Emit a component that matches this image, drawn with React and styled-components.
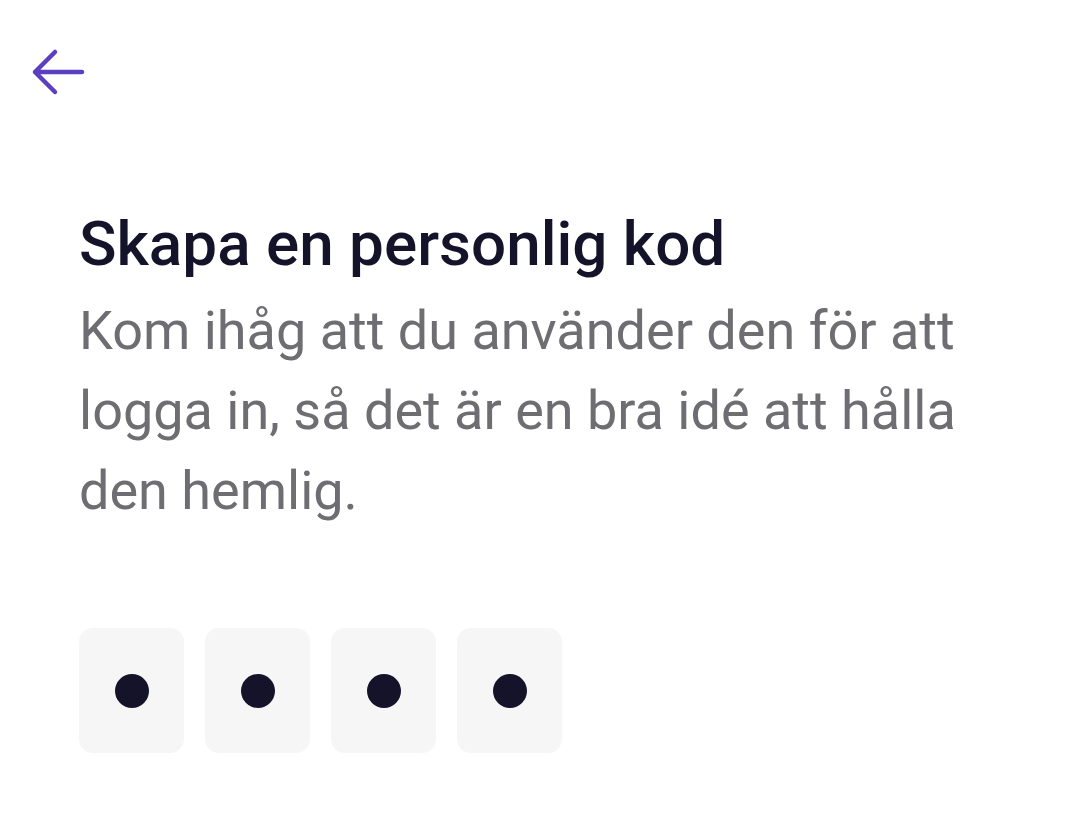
import React from 'react'
import styled, { createGlobalStyle } from 'styled-components'

const GlobalStyle = createGlobalStyle`
    body {
        margin: 0;
        background: #ffffff;
        font-family: Roboto, "Noto Sans", sans-serif;
    }
`

const Page = styled.div`
    width: 1075px;
    height: 815px;
    display: flex;
    flex-direction: column;
`

const TopBar = styled.div`
    height: 145px;
    padding: 46px 0 0 30px;
    box-sizing: border-box;
`

const BackButton = styled.button`
    border: none;
    background: none;
    padding: 0;
    width: 58px;
    height: 54px;
    cursor: pointer;
`

const Content = styled.div`
    padding: 63px 0 0 79px;
`

const Title = styled.h1`
    margin: 0;
    font-size: 62px;
    font-weight: 500;
    line-height: 72px;
    color: #15132a;
`

const Text = styled.p`
    margin: 11px 0 0;
    max-width: 910px;
    font-size: 54px;
    line-height: 80px;
    color: #6e6d72;
`

const Boxes = styled.div`
    display: flex;
    gap: 21px;
    margin-top: 97px;
`

const Box = styled.div`
    width: 105px;
    height: 125px;
    border-radius: 14px;
    background: #f6f6f7;
    display: flex;
    align-items: center;
    justify-content: center;
`

const Dot = styled.span`
    width: 34px;
    height: 34px;
    border-radius: 50%;
    background: ${(p) => (p.filled ? '#15132a' : 'transparent')};
`

const App = () => {
    const code = [1, 2, 3, 4]

    return (
        <Page>
            <GlobalStyle />
            <TopBar>
                <BackButton aria-label="Tillbaka">
                    <svg width="58" height="54" viewBox="0 0 58 54" fill="none">
                        <path
                            d="M52 26H5M25 6L5 26l20 20"
                            stroke="#5a3fc0"
                            strokeWidth="4.5"
                            strokeLinecap="round"
                            strokeLinejoin="round"
                        />
                    </svg>
                </BackButton>
            </TopBar>
            <Content>
                <Title>Skapa en personlig kod</Title>
                <Text>
                    Kom ihåg att du använder den för att logga in, så det är en bra idé att hålla den hemlig.
                </Text>
                <Boxes>
                    {code.map((item) => (
                        <Box key={item}>
                            <Dot filled />
                        </Box>
                    ))}
                </Boxes>
            </Content>
        </Page>
    )
}

export default App
